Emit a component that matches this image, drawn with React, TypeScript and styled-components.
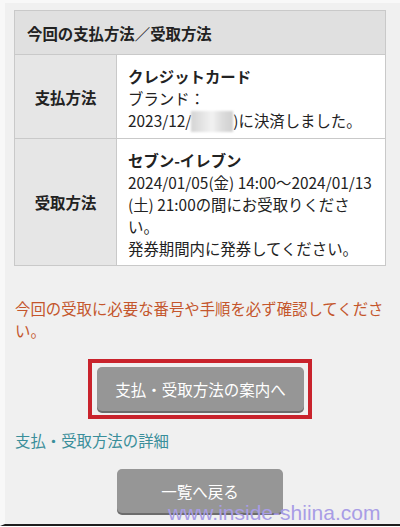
import React from 'react';
import styled, { createGlobalStyle } from 'styled-components';

const Global = createGlobalStyle`
  html, body { margin: 0; padding: 0; background: #ffffff; }
  body { font-family: "Noto Sans CJK JP", "Noto Sans", sans-serif; color: #222; }
  * { box-sizing: border-box; }
`;

const Page = styled.div`
  position: relative;
  width: 400px;
  height: 526px;
  background: #f0f0f0;
  border-left: 5px solid #f8f8f8;
  border-top: 3px solid #f8f8f8;
  border-bottom: 2px solid #1e1e1e;
  padding: 7px 0 0 9px;
  overflow: hidden;
  display: flex;
  flex-direction: column;
`;

const Table = styled.div`
  width: 372px;
  display: grid;
  grid-template-columns: 102px 1fr;
  border: 1px solid #c9c9c9;
  background: #fff;
  font-size: 15.4px;
`;

const Header = styled.div`
  grid-column: 1 / -1;
  height: 44px;
  background: #e0e0e0;
  border-bottom: 1px solid #c9c9c9;
  display: flex;
  align-items: center;
  padding-left: 12px;
  font-weight: 700;
`;

const Label = styled.div<{ $last?: boolean }>`
  background: #e6e6e6;
  border-right: 1px solid #c9c9c9;
  border-bottom: ${(p) => (p.$last ? 'none' : '1px solid #c9c9c9')};
  display: flex;
  align-items: center;
  justify-content: center;
  font-weight: 700;
`;

const Value = styled.div<{ $last?: boolean }>`
  background: #fff;
  border-bottom: ${(p) => (p.$last ? 'none' : '1px solid #c9c9c9')};
  padding: 10px 6px 6px 11px;
  line-height: 22px;
`;

const Line = styled.div<{ $bold?: boolean }>`
  white-space: nowrap;
  font-weight: ${(p) => (p.$bold ? 700 : 400)};
`;

const Blur = styled.span`
  display: inline-block;
  width: 42px;
  height: 21px;
  vertical-align: -5px;
  background: linear-gradient(90deg, #d4d4d4 0%, #e6e6e6 30%, #f2f2f2 50%, #dcdcdc 75%, #d0d0d0 100%);
  filter: blur(1px);
`;

const Notice = styled.p`
  margin: 31px 0 0 1px;
  width: 372px;
  font-size: 15.4px;
  line-height: 22px;
  color: #c4562c;
`;

const Highlight = styled.div`
  align-self: flex-start;
  margin: 18px 0 0 74px;
  width: 224px;
  height: 60px;
  border: 4px solid #c9232c;
  padding: 4px 4px 0 5px;
`;

const GrayButton = styled.button<{ $w: number }>`
  width: ${(p) => p.$w}px;
  height: 44px;
  border: none;
  border-radius: 5px;
  background: #969696;
  box-shadow: 0 2px 0 #6c6c6c;
  color: #fff;
  font-family: "Noto Sans CJK JP", "Noto Sans", sans-serif;
  font-size: 15.5px;
  padding: 0;
  display: flex;
  align-items: center;
  justify-content: center;
`;

const DetailLink = styled.a`
  margin: 10px 0 0 1px;
  font-size: 15.4px;
  line-height: 22px;
  color: #3a8e9a;
  text-decoration: none;
`;

const BackWrap = styled.div`
  margin: 18px 0 0 103px;
`;

const Watermark = styled.div`
  position: absolute;
  left: 163px;
  top: 499px;
  font-family: "Liberation Sans", Arial, sans-serif;
  font-size: 21px;
  line-height: 21px;
  color: #a89de6;
  white-space: nowrap;
  pointer-events: none;
`;

export default function App() {
  return (
    <>
      <Global />
      <Page>
        <Table>
          <Header>今回の支払方法／受取方法</Header>
          <Label>支払方法</Label>
          <Value>
            <Line $bold>クレジットカード</Line>
            <Line>ブランド：</Line>
            <Line>
              2023/12/<Blur />)に決済しました。
            </Line>
          </Value>
          <Label $last>受取方法</Label>
          <Value $last>
            <Line $bold>セブン-イレブン</Line>
            <Line>2024/01/05(金) 14:00～2024/01/13</Line>
            <Line>(土) 21:00の間にお受取りくださ</Line>
            <Line>い。</Line>
            <Line>発券期間内に発券してください。</Line>
          </Value>
        </Table>
        <Notice>今回の受取に必要な番号や手順を必ず確認してください。</Notice>
        <Highlight>
          <GrayButton $w={207}>支払・受取方法の案内へ</GrayButton>
        </Highlight>
        <DetailLink href="#">支払・受取方法の詳細</DetailLink>
        <BackWrap>
          <GrayButton $w={166}>一覧へ戻る</GrayButton>
        </BackWrap>
        <Watermark>www.inside-shiina.com</Watermark>
      </Page>
    </>
  );
}
